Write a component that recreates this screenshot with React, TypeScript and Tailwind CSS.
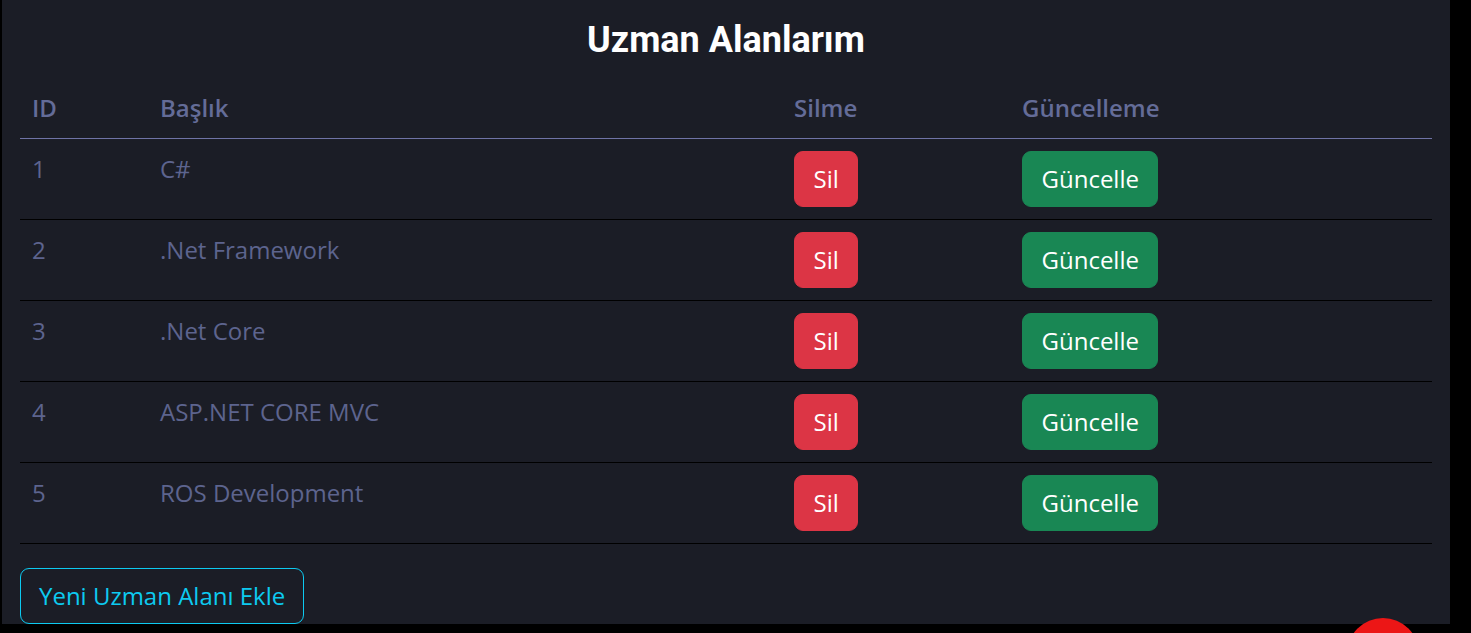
import React from "react";

const rows = [
  { id: 1, title: "C#" },
  { id: 2, title: ".Net Framework" },
  { id: 3, title: ".Net Core" },
  { id: 4, title: "ASP.NET CORE MVC" },
  { id: 5, title: "ROS Development" },
];

export default function App() {
  return (
    <div className="relative w-[1471px] h-[633px] bg-black overflow-hidden">
      <div
        className="ml-[2px] w-[1448px] h-[624px] bg-[#1b1d26] px-[18px]"
        style={{ fontFamily: '"Open Sans", "Liberation Sans", sans-serif' }}
      >
        <div className="h-[78px] pt-[19px] text-center">
          <h1
            className="text-[36px] leading-[43px] font-bold text-white"
            style={{ fontFamily: 'Roboto, "Liberation Sans", sans-serif' }}
          >
            Uzman Alanlarım
          </h1>
        </div>
        <table className="w-[1412px] border-collapse table-fixed">
          <colgroup>
            <col className="w-[128px]" />
            <col className="w-[634px]" />
            <col className="w-[228px]" />
            <col className="w-[422px]" />
          </colgroup>
          <thead>
            <tr className="border-b border-[#6f73a6]">
              {["ID", "Başlık", "Silme", "Güncelleme"].map((h) => (
                <th
                  key={h}
                  className="text-left px-3 py-3 text-[24px] leading-[36px] font-semibold text-[#646c98]"
                >
                  {h}
                </th>
              ))}
            </tr>
          </thead>
          <tbody>
            {rows.map((r) => (
              <tr key={r.id} className="border-b border-black">
                <td className="align-top px-3 py-3 text-[24px] leading-[36px] text-[#5d648e]">
                  {r.id}
                </td>
                <td className="align-top px-3 py-3 text-[24px] leading-[36px] text-[#5d648e]">
                  {r.title}
                </td>
                <td className="align-top px-3 py-3">
                  <button className="h-[56px] px-[18.5px] rounded-[9px] bg-[#dc3545] border border-[#dc3545] text-white text-[24px] leading-[36px]">
                    Sil
                  </button>
                </td>
                <td className="align-top px-3 py-3">
                  <button className="h-[56px] px-[18.5px] rounded-[9px] bg-[#198754] border border-[#198754] text-white text-[24px] leading-[36px]">
                    Güncelle
                  </button>
                </td>
              </tr>
            ))}
          </tbody>
        </table>
        <button className="mt-[24px] h-[56px] px-[18px] rounded-[9px] border border-[#0dcaf0] text-[#0dcaf0] text-[24px] leading-[36px]">
          Yeni Uzman Alanı Ekle
        </button>
      </div>
      <div className="absolute left-[1347px] top-[618px] w-[72px] h-[72px] rounded-full bg-[#ec1616]" />
    </div>
  );
}
